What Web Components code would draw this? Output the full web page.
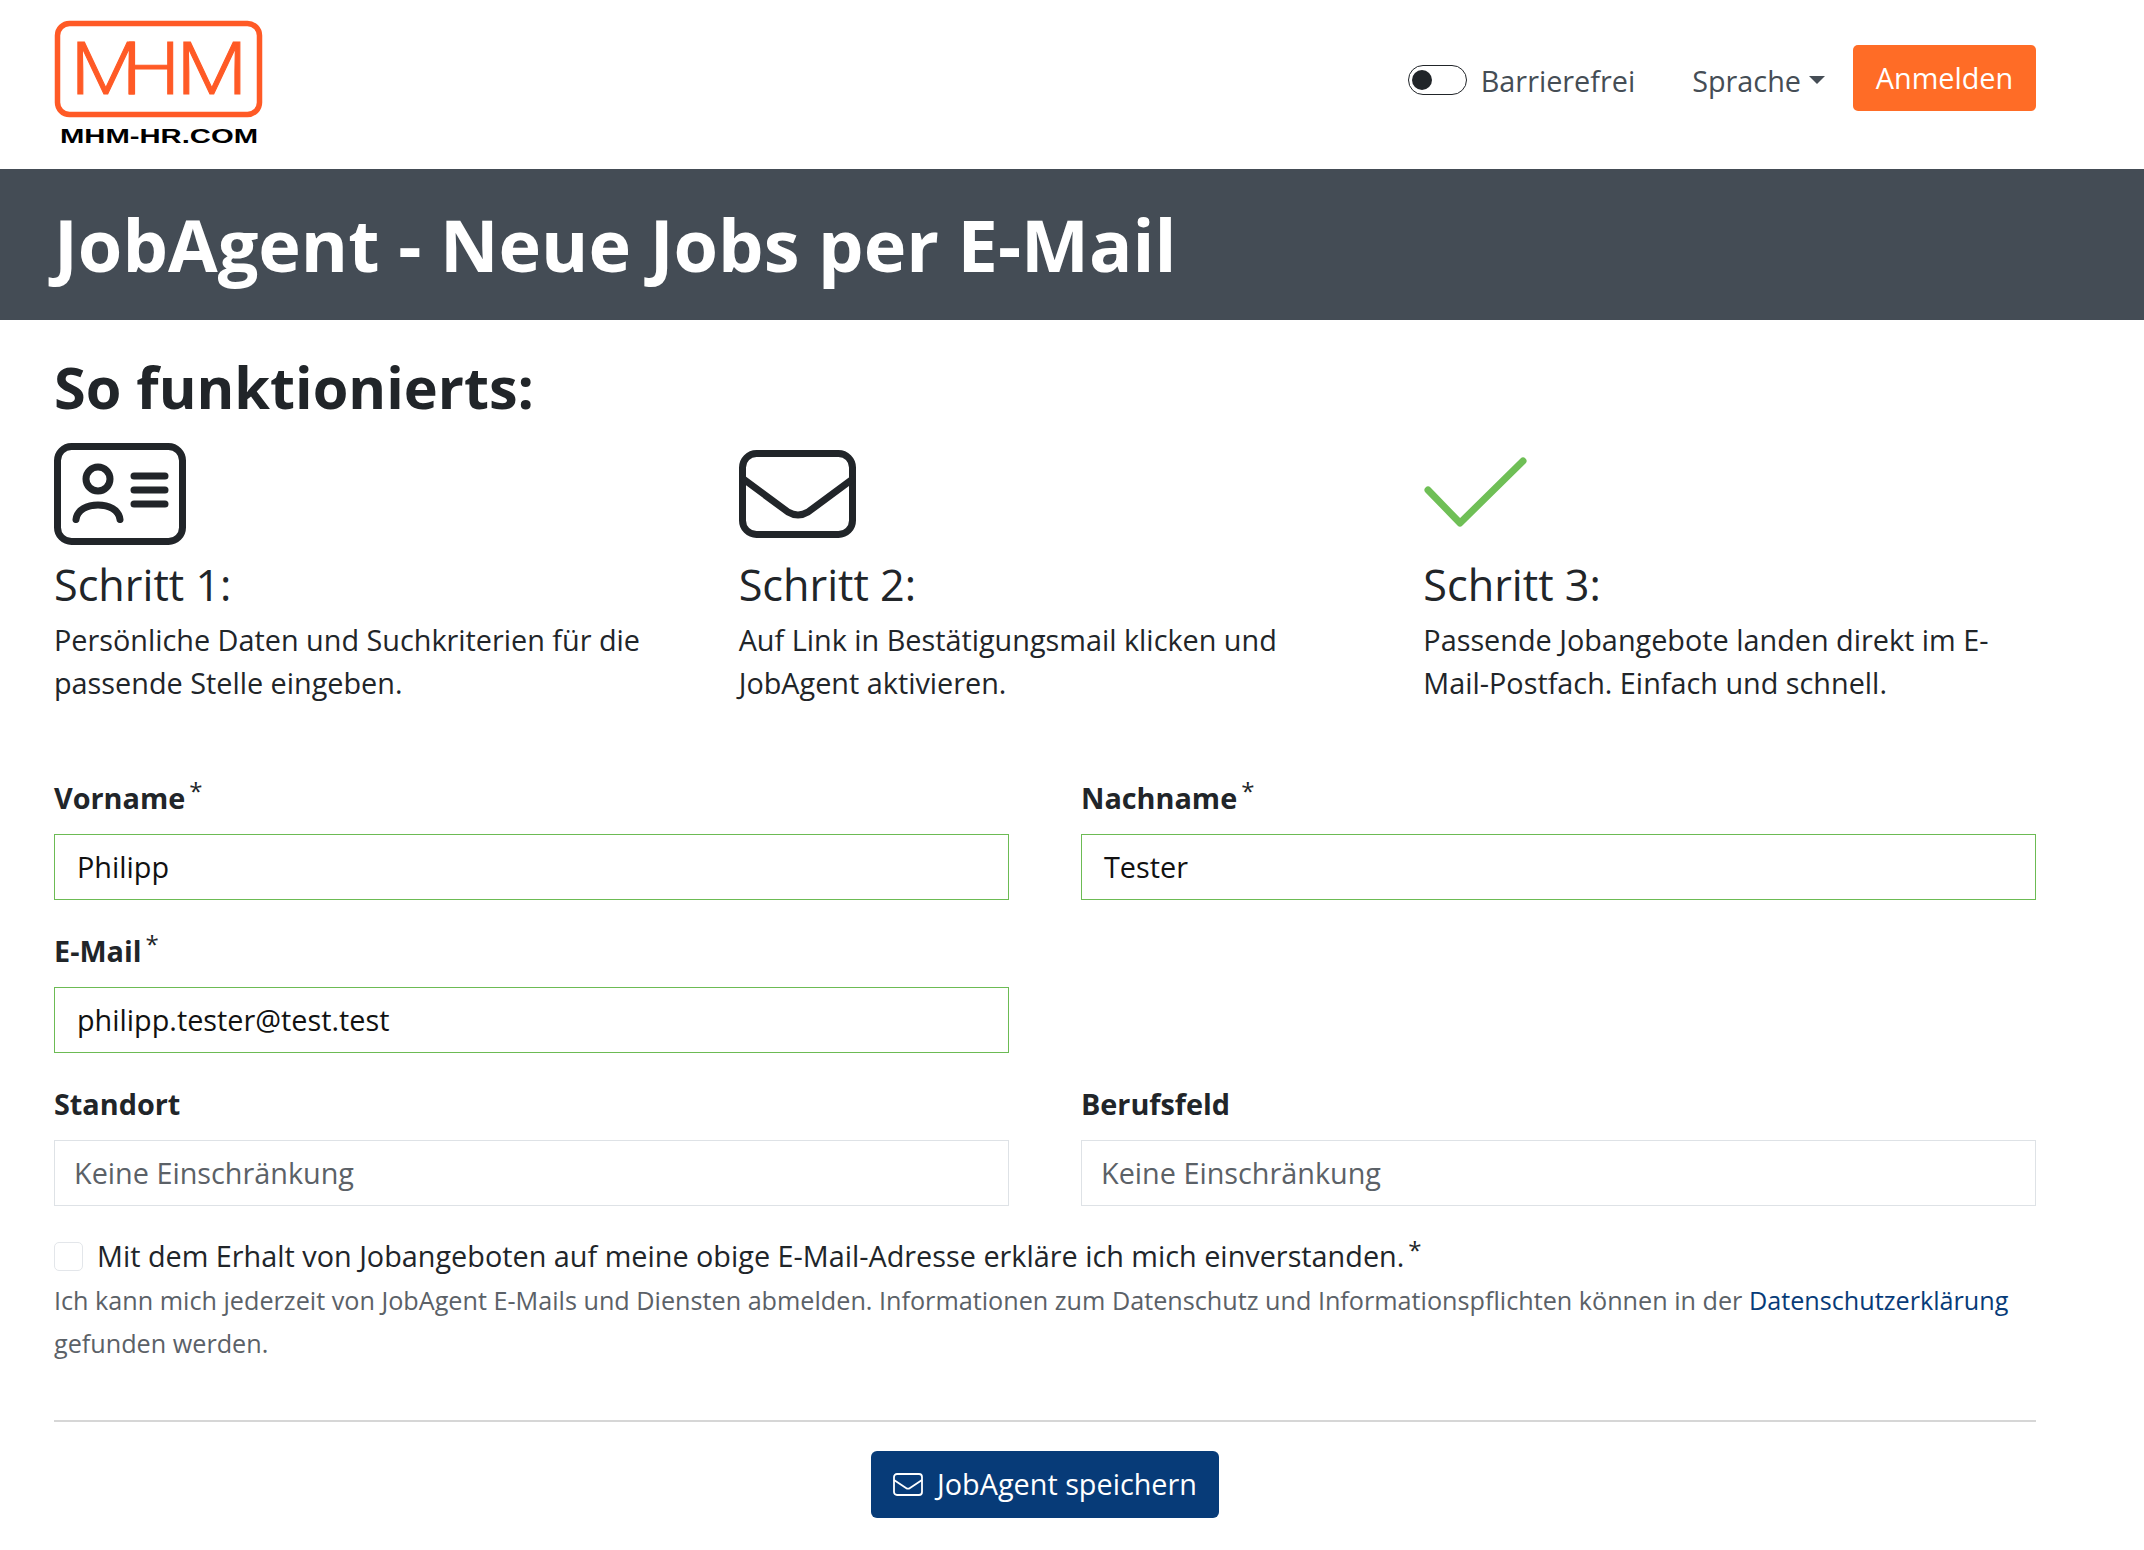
<!DOCTYPE html>
<html lang="de">
<head>
<meta charset="utf-8">
<title>JobAgent</title>
<style>
  html, body { margin: 0; background: #fff; }
  body { font-family: "Open Sans", sans-serif; color: #212529; }
</style>
</head>
<body>
<job-page></job-page>
<script>
class SiteHeader extends HTMLElement {
  constructor () {
    super()
    this.attachShadow({ mode: 'open' }).innerHTML = /* html */`
      <style>
        :host { display: flex; align-items: center; justify-content: space-between; height: 169px; padding: 0 108px 0 54px; }
        svg { display: block; width: 210px; height: 130px; }
        .right { display: flex; align-items: center; margin-bottom: 13px; }
        .toggle { box-sizing: border-box; width: 59px; height: 30px; border: 1.5px solid #212529; border-radius: 15px; position: relative; margin-right: 14px; margin-top: 4px; }
        .toggle::after { content: ""; position: absolute; left: 3px; top: 3.5px; width: 20px; height: 20px; border-radius: 50%; background: #212529; }
        .link { font-size: 28.8px; color: #454d55; line-height: 44px; margin-top: 5px; }
        .lang { margin-left: 57px; margin-right: 28px; display: flex; align-items: center; }
        .lang i { display: block; width: 0; height: 0; margin-left: 8px; margin-top: -1px; border: 8px solid transparent; border-top-color: #454d55; border-bottom: 0; }
        .login { box-sizing: border-box; width: 183px; height: 66px; background: #ff6c26; color: #fff; border-radius: 5px; font-size: 28.8px; display: flex; align-items: center; justify-content: center; padding-bottom: 2px; }
      </style>
      <svg viewBox="0 0 210 130" aria-label="MHM Logo">
        <rect x="3.5" y="3.5" width="202" height="91" rx="12" fill="none" stroke="#ff5a26" stroke-width="5.5"/>
        <text transform="scale(1.12 1)" x="14.7 61 109.4" y="74" font-family="Roboto, sans-serif" font-weight="300" font-size="73" fill="#ff5a26" stroke="#ff5a26" stroke-width="1">MHM</text>
        <text x="6" y="123" font-family="Liberation Sans, sans-serif" font-weight="700" font-size="21" fill="#000" textLength="198" lengthAdjust="spacingAndGlyphs">MHM-HR.COM</text>
      </svg>
      <div class="right">
        <div class="toggle"></div>
        <div class="link">Barrierefrei</div>
        <div class="link lang">Sprache<i></i></div>
        <div class="login">Anmelden</div>
      </div>
    `
  }
}
customElements.define('site-header', SiteHeader)

class PageBanner extends HTMLElement {
  constructor () {
    super()
    this.attachShadow({ mode: 'open' }).innerHTML = /* html */`
      <style>
        :host { box-sizing: border-box; display: flex; align-items: center; height: 151px; padding: 0 0 2px 54px; background: #444c55; color: #fff; font-size: 72px; font-weight: 700; }
      </style>
      <slot></slot>
    `
  }
}
customElements.define('page-banner', PageBanner)

class StepCard extends HTMLElement {
  constructor () {
    super()
    this.attachShadow({ mode: 'open' }).innerHTML = /* html */`
      <style>
        :host { display: block; }
        .icon { height: 102px; }
        .icon ::slotted(svg) { display: block; }
        .title { font-size: 43.2px; line-height: 60px; margin: 10px 0 3px; }
        .text { font-size: 28.8px; line-height: 43px; }
      </style>
      <div class="icon"><slot name="icon"></slot></div>
      <div class="title"><slot name="title"></slot></div>
      <div class="text"><slot></slot></div>
    `
  }
}
customElements.define('step-card', StepCard)

class FormField extends HTMLElement {
  constructor () {
    super()
    const req = this.hasAttribute('required') ? '<sup>*</sup>' : ''
    const cls = this.hasAttribute('placeholder') ? 'box empty' : 'box'
    this.attachShadow({ mode: 'open' }).innerHTML = /* html */`
      <style>
        :host { display: block; }
        .label { font-size: 28.8px; line-height: 44px; font-weight: 700; margin-bottom: 16px; height: 42px; }
        sup { font-weight: 400; font-size: 24px; line-height: 0; margin-left: 4px; vertical-align: 9px; }
        .box { box-sizing: border-box; height: 66px; border: 1.5px solid #6cbb54; padding: 0 22px 2px; display: flex; align-items: center; font-size: 28.8px; color: #111; }
        .box.empty { border-color: #dee2e6; padding: 0 19px 2px; color: #5b6167; }
      </style>
      <div class="label">${this.getAttribute('label')}${req}</div>
      <div class="${cls}"><slot></slot></div>
    `
  }
}
customElements.define('form-field', FormField)

class ConsentBox extends HTMLElement {
  constructor () {
    super()
    this.attachShadow({ mode: 'open' }).innerHTML = /* html */`
      <style>
        :host { display: block; }
        .row { display: flex; align-items: center; height: 46px; font-size: 28.8px; }
        .check { box-sizing: border-box; width: 29px; height: 29px; border: 1.5px solid #e3e6ea; border-radius: 5px; margin-right: 14px; }
        .row span { margin-bottom: 2px; }
        sup { font-size: 24px; line-height: 0; margin-left: 4px; align-self: flex-start; margin-top: 17px; }
        .note { font-size: 25.2px; line-height: 43px; color: #5b6167; }
      </style>
      <div class="row"><div class="check"></div><span><slot name="label"></slot></span><sup>*</sup></div>
      <div class="note"><slot></slot></div>
    `
  }
}
customElements.define('consent-box', ConsentBox)

class SaveButton extends HTMLElement {
  constructor () {
    super()
    this.attachShadow({ mode: 'open' }).innerHTML = /* html */`
      <style>
        :host { box-sizing: border-box; display: flex; align-items: center; justify-content: center; gap: 14px; width: 348px; height: 67px; background: #073b78; color: #fff; border-radius: 6px; font-size: 28.8px; }
        svg { display: block; margin-top: 1px; }
        span { margin-bottom: 2px; }
      </style>
      <svg width="30" height="24" viewBox="0 0 30 24" fill="none" stroke="#fff" stroke-width="1.8" stroke-linejoin="round">
        <rect x="1" y="1" width="28" height="21" rx="3"/>
        <path d="M1 7 L13 15 Q15 16.4 17 15 L29 7"/>
      </svg>
      <span><slot></slot></span>
    `
  }
}
customElements.define('save-button', SaveButton)

class JobPage extends HTMLElement {
  constructor () {
    super()
    this.attachShadow({ mode: 'open' }).innerHTML = /* html */`
      <style>
        :host { display: block; }
        main { padding: 0 108px 0 54px; }
        h2 { margin: 0; padding-top: 33px; height: 90px; font-size: 57.6px; line-height: 68px; font-weight: 700; }
        .steps { display: grid; grid-template-columns: repeat(3, 1fr); gap: 72px; margin-bottom: 72px; }
        .fields { display: grid; grid-template-columns: 1fr 1fr; column-gap: 72px; row-gap: 29px; margin-bottom: 27px; }
        hr { border: 0; border-top: 2px solid #d6d6d6; margin: 55px 0 29px; }
        .foot { display: flex; justify-content: center; }
        a { color: #073b78; text-decoration: none; }
      </style>
      <site-header></site-header>
      <page-banner>JobAgent - Neue Jobs per E-Mail</page-banner>
      <main>
        <h2>So funktionierts:</h2>
        <div class="steps">
          <step-card>
            <svg slot="icon" width="132" height="102" viewBox="0 0 132 102" fill="none" stroke="#212529" stroke-width="7" stroke-linecap="round">
              <rect x="3.5" y="3.5" width="125" height="95" rx="14"/>
              <circle cx="44" cy="36" r="12"/>
              <path d="M22 76.5 C24 57 64 57 66 76.5"/>
              <path d="M80 33 H111 M80 47 H111 M80 61 H111"/>
            </svg>
            <span slot="title">Schritt 1:</span>
            Persönliche Daten und Suchkriterien für die passende Stelle eingeben.
          </step-card>
          <step-card>
            <svg slot="icon" width="118" height="102" viewBox="0 0 118 102" fill="none" stroke="#212529" stroke-width="7" stroke-linejoin="round">
              <rect x="3.5" y="10.5" width="110" height="81" rx="14"/>
              <path d="M3 35 L49 69 Q59 75 69 69 L115 35"/>
            </svg>
            <span slot="title">Schritt 2:</span>
            Auf Link in Bestätigungsmail klicken und JobAgent aktivieren.
          </step-card>
          <step-card>
            <svg slot="icon" width="106" height="102" viewBox="0 0 106 102" fill="none" stroke="#6fbf56" stroke-width="7" stroke-linecap="round" stroke-linejoin="round">
              <path d="M5 47 L37 80 L100 18"/>
            </svg>
            <span slot="title">Schritt 3:</span>
            Passende Jobangebote landen direkt im E-Mail-Postfach. Einfach und schnell.
          </step-card>
        </div>
        <div class="fields">
          <form-field label="Vorname" required>Philipp</form-field>
          <form-field label="Nachname" required>Tester</form-field>
          <form-field label="E-Mail" required>philipp.tester@test.test</form-field>
          <div></div>
          <form-field label="Standort" placeholder>Keine Einschränkung</form-field>
          <form-field label="Berufsfeld" placeholder>Keine Einschränkung</form-field>
        </div>
        <consent-box>
          <span slot="label">Mit dem Erhalt von Jobangeboten auf meine obige E-Mail-Adresse erkläre ich mich einverstanden.</span>
          Ich kann mich jederzeit von JobAgent E-Mails und Diensten abmelden. Informationen zum Datenschutz und Informationspflichten können in der <a href="#">Datenschutzerklärung</a> gefunden werden.
        </consent-box>
        <hr>
        <div class="foot"><save-button>JobAgent speichern</save-button></div>
      </main>
    `
  }
}
customElements.define('job-page', JobPage)
</script>
</body>
</html>
